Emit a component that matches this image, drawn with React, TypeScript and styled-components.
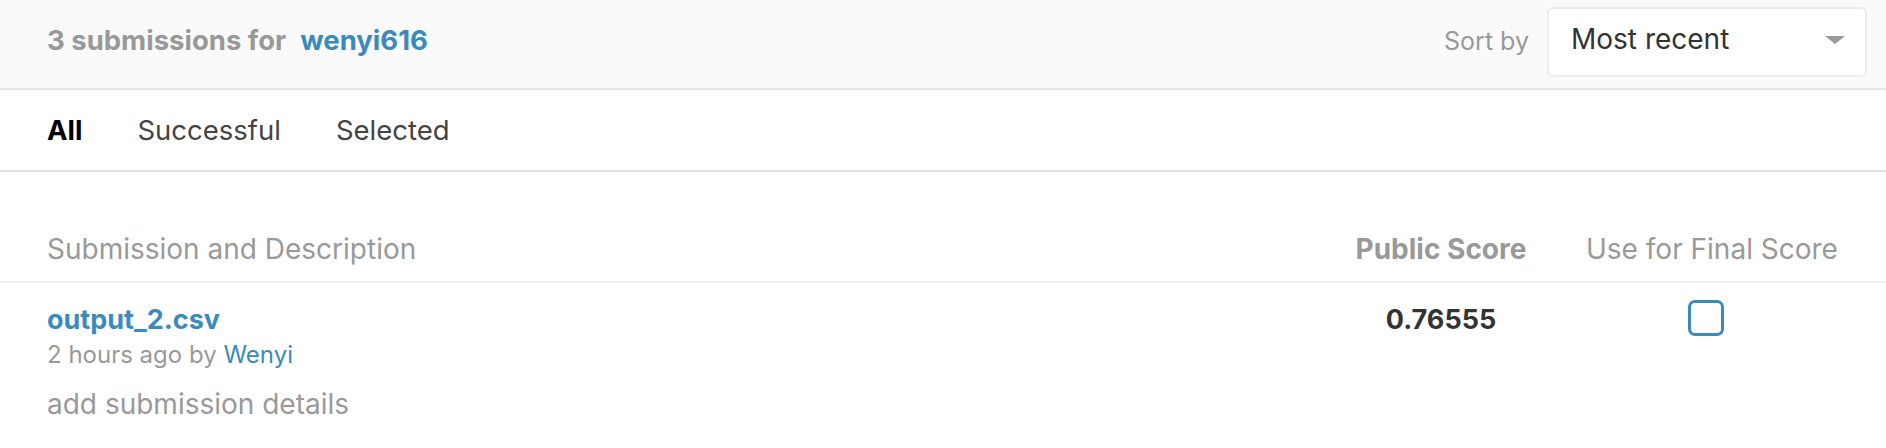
import React from "react";
import styled, { createGlobalStyle } from "styled-components";

const Global = createGlobalStyle`
  html, body { margin: 0; padding: 0; background: #fff; }
  body { font-family: Inter, Roboto, "Liberation Sans", Arial, sans-serif; -webkit-font-smoothing: antialiased; }
`;

const Page = styled.div`
  width: 1886px;
  height: 448px;
  overflow: hidden;
  background: #fff;
`;

const Header = styled.div`
  height: 88px;
  background: #fafafa;
  border-bottom: 2px solid #e8e8e8;
  display: flex;
  align-items: center;
  justify-content: space-between;
  padding: 0 19px 0 47px;
`;

const Title = styled.div`
  font-size: 27.5px;
  font-weight: 700;
  color: #999;
  display: flex;
  gap: 14px;
  margin-top: -8px;
`;

const Link = styled.a<{ $bold?: boolean }>`
  color: #3a8bbd;
  text-decoration: none;
  font-weight: ${(p) => (p.$bold ? 700 : 400)};
`;

const SortWrap = styled.div`
  display: flex;
  align-items: center;
  gap: 18px;
`;

const SortLabel = styled.span`
  font-size: 25px;
  color: #999;
  margin-top: -6px;
`;

const Select = styled.div`
  width: 320px;
  height: 70px;
  box-sizing: border-box;
  border: 2px solid #ececec;
  border-radius: 6px;
  background: #fff;
  display: flex;
  align-items: center;
  justify-content: space-between;
  padding: 0 20px 0 22px;
  margin-top: -4px;
`;

const SelectText = styled.span`
  font-size: 28px;
  color: #333;
  margin-top: -6px;
`;

const Caret = styled.span`
  width: 0;
  height: 0;
  border-left: 10px solid transparent;
  border-right: 10px solid transparent;
  border-top: 8px solid #999;
  margin-top: -4px;
`;

const Tabs = styled.div`
  height: 80px;
  border-bottom: 2px solid #e2e2e2;
  display: flex;
  align-items: center;
  gap: 55px;
  padding-left: 47px;
`;

const Tab = styled.span<{ $active?: boolean }>`
  font-size: 27.5px;
  color: ${(p) => (p.$active ? "#000" : "#444")};
  font-weight: ${(p) => (p.$active ? 700 : 400)};
`;

const Table = styled.div``;

const Row = styled.div<{ $head?: boolean }>`
  display: grid;
  grid-template-columns: 1fr 290px 250px;
  padding: 0 50px 0 47px;
  border-bottom: ${(p) => (p.$head ? "2px solid #efefef" : "none")};
`;

const HeadCell = styled.div<{ $bold?: boolean; $center?: boolean }>`
  font-size: 28px;
  color: #999;
  font-weight: ${(p) => (p.$bold ? 700 : 400)};
  text-align: ${(p) => (p.$center ? "center" : "left")};
  padding-top: 59px;
  height: 50px;
  line-height: 36px;
  white-space: nowrap;
`;

const SubCell = styled.div`
  display: flex;
  flex-direction: column;
  padding-top: 20px;
`;

const FileName = styled(Link)`
  font-size: 27px;
  line-height: 34px;
`;

const Meta = styled.div`
  font-size: 24px;
  line-height: 36px;
  color: #999;
`;

const Desc = styled.div`
  font-size: 28px;
  line-height: 38px;
  color: #999;
  margin-top: 12px;
`;

const Score = styled.div`
  font-size: 27px;
  font-weight: 700;
  color: #333;
  text-align: center;
  padding-top: 19px;
  line-height: 36px;
`;

const CheckCell = styled.div`
  display: flex;
  justify-content: center;
  padding-top: 17px;
  padding-right: 10px;
`;

const Checkbox = styled.span`
  width: 36px;
  height: 36px;
  box-sizing: border-box;
  border: 3px solid #3a8bbd;
  border-radius: 7px;
`;

export default function App() {
  return (
    <Page>
      <Global />
      <Header>
        <Title>
          <span>3 submissions for</span>
          <Link $bold href="#">wenyi616</Link>
        </Title>
        <SortWrap>
          <SortLabel>Sort by</SortLabel>
          <Select>
            <SelectText>Most recent</SelectText>
            <Caret />
          </Select>
        </SortWrap>
      </Header>
      <Tabs>
        <Tab $active>All</Tab>
        <Tab>Successful</Tab>
        <Tab>Selected</Tab>
      </Tabs>
      <Table>
        <Row $head>
          <HeadCell>Submission and Description</HeadCell>
          <HeadCell $bold $center>Public Score</HeadCell>
          <HeadCell $center>Use for Final Score</HeadCell>
        </Row>
        <Row>
          <SubCell>
            <FileName $bold href="#">output_2.csv</FileName>
            <Meta>
              2 hours ago by <Link href="#">Wenyi</Link>
            </Meta>
            <Desc>add submission details</Desc>
          </SubCell>
          <Score>0.76555</Score>
          <CheckCell>
            <Checkbox />
          </CheckCell>
        </Row>
      </Table>
    </Page>
  );
}
